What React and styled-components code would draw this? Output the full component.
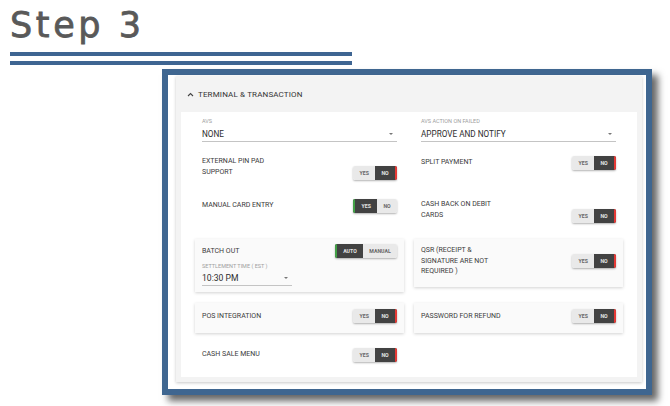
import React from 'react';
import styled, { createGlobalStyle } from 'styled-components';

const GlobalStyle = createGlobalStyle`
  html, body {
    margin: 0;
    padding: 0;
    background: #ffffff;
  }
  body {
    width: 670px;
    height: 406px;
    overflow: hidden;
    font-family: Roboto, "Liberation Sans", sans-serif;
  }
`;

const Page = styled.div`
  display: flex;
  flex-direction: column;
  padding-top: 8px;
`;

const Title = styled.h1`
  margin: 0 0 0 10px;
  font-family: "DejaVu Sans", "Open Sans", sans-serif;
  font-weight: 400;
  font-size: 35px;
  line-height: 35px;
  letter-spacing: 3.6px;
  color: #595959;
  -webkit-text-stroke: 0.8px #595959;
`;

const Rule = styled.div`
  width: 342px;
  height: 4px;
  margin: ${(p) => p.$top}px 0 0 10px;
  background: #3e6592;
`;

const Frame = styled.div`
  box-sizing: border-box;
  width: 490px;
  height: 326px;
  margin: 4px 0 0 162px;
  padding: 1px 4px 7px 8px;
  border: 6px solid #3f6690;
  background: #ffffff;
  box-shadow: 6px 6px 7px rgba(0, 0, 0, 0.6);
  display: flex;
`;

const Card = styled.div`
  flex: 1;
  display: flex;
  flex-direction: column;
  background: #f3f3f3;
  box-shadow: 0 1px 3px rgba(0, 0, 0, 0.22);
`;

const CardHeader = styled.div`
  height: 36px;
  box-sizing: border-box;
  padding: 2px 0 0 11px;
  display: flex;
  align-items: center;
  gap: 4px;
  font-size: 8px;
  color: #333;
  letter-spacing: 0.15px;
`;

const Content = styled.div`
  flex: 1;
  margin: 0 5px 5px;
  padding: 6.5px 14px 0;
  background: #ffffff;
  display: flex;
  flex-direction: column;
`;

const Pair = styled.div`
  display: grid;
  grid-template-columns: 1fr 1fr;
  column-gap: 10px;
  align-items: start;
  margin-top: ${(p) => p.$top || 0}px;
`;

const Cell = styled.div`
  padding: 0 7px;
  display: flex;
  justify-content: space-between;
  align-items: flex-end;
`;

const Box = styled.div`
  box-sizing: border-box;
  padding: ${(p) => p.$pad || '6px 7px 9.6px'};
  background: #fafafa;
  box-shadow: 0 1px 3px rgba(0, 0, 0, 0.18);
  display: flex;
  flex-direction: ${(p) => (p.$column ? 'column' : 'row')};
  justify-content: space-between;
  align-items: ${(p) => (p.$column ? 'stretch' : 'center')};
`;

const RowText = styled.div`
  font-size: 7px;
  line-height: 10.6px;
  color: #3a3a3a;
  padding-bottom: ${(p) => (p.$flat ? 0 : 2.5)}px;
  white-space: pre-line;
`;

const SelectWrap = styled.div`
  display: flex;
  flex-direction: column;
  width: ${(p) => p.$width || 'auto'};
  margin-top: ${(p) => p.$top || 0}px;
`;

const SmallLabel = styled.div`
  font-size: 5.5px;
  line-height: 7px;
  color: #a0a0a0;
`;

const Field = styled.div`
  display: flex;
  align-items: center;
  justify-content: space-between;
  padding: 3.5px 4px 2px 0;
  border-bottom: 1px solid #c4c4c4;
  font-size: ${(p) => p.$size || 8.2}px;
  line-height: 10px;
  color: #2e2e2e;
`;

const Caret = styled.span`
  width: 0;
  height: 0;
  border-left: 2.5px solid transparent;
  border-right: 2.5px solid transparent;
  border-top: 2.5px solid #777;
`;

const Toggle = styled.div`
  display: flex;
  height: 14px;
  border-radius: 2px;
  overflow: hidden;
  flex-shrink: 0;
  box-shadow: 0 1px 2px rgba(0, 0, 0, 0.3);
`;

const Segment = styled.div`
  display: flex;
  align-items: center;
  justify-content: center;
  padding: 0 6.3px;
  font-size: 5.2px;
  font-weight: 700;
  background: ${(p) => (p.$on ? '#424242' : '#e9e9e9')};
  color: ${(p) => (p.$on ? '#e6e6e6' : '#666')};
  border-left: ${(p) => (p.$accent === 'green' ? '2px solid #43a047' : 'none')};
  border-right: ${(p) => (p.$accent === 'red' ? '2px solid #e53935' : 'none')};
`;

const BoxTop = styled.div`
  display: flex;
  justify-content: space-between;
  align-items: center;
`;

function Switch({ options = ['YES', 'NO'], value = 'NO' }) {
  return (
    <Toggle>
      {options.map((o, i) => {
        const on = o === value;
        let accent;
        if (on) accent = i === 0 ? 'green' : 'red';
        return (
          <Segment key={o} $on={on} $accent={accent}>
            {o}
          </Segment>
        );
      })}
    </Toggle>
  );
}

function Select({ label, value, width, size, top }) {
  return (
    <SelectWrap $width={width} $top={top}>
      <SmallLabel>{label}</SmallLabel>
      <Field $size={size}>
        <span>{value}</span>
        <Caret />
      </Field>
    </SelectWrap>
  );
}

function Chevron() {
  return (
    <svg width="7" height="5" viewBox="0 0 7 5">
      <polyline points="1,4 3.5,1.5 6,4" fill="none" stroke="#444" strokeWidth="1.1" />
    </svg>
  );
}

export default function App() {
  return (
    <>
      <GlobalStyle />
      <Page>
        <Title>Step 3</Title>
        <Rule $top={9} />
        <Rule $top={4.5} />
        <Frame>
          <Card>
            <CardHeader>
              <Chevron />
              TERMINAL &amp; TRANSACTION
            </CardHeader>
            <Content>
              <Pair>
                <Cell>
                  <Select label="AVS" value="NONE" width="100%" />
                </Cell>
                <Cell>
                  <Select label="AVS ACTION ON FAILED" value="APPROVE AND NOTIFY" width="100%" />
                </Cell>
              </Pair>
              <Pair $top={14.7}>
                <Cell>
                  <RowText>{'EXTERNAL PIN PAD\nSUPPORT'}</RowText>
                  <Switch value="NO" />
                </Cell>
                <Cell>
                  <RowText>SPLIT PAYMENT</RowText>
                  <Switch value="NO" />
                </Cell>
              </Pair>
              <Pair $top={19.3}>
                <Cell>
                  <RowText>MANUAL CARD ENTRY</RowText>
                  <Switch value="YES" />
                </Cell>
                <Cell>
                  <RowText>{'CASH BACK ON DEBIT\nCARDS'}</RowText>
                  <Switch value="NO" />
                </Cell>
              </Pair>
              <Pair $top={16.3}>
                <Box $column $pad="5px 7px 5.7px">
                  <BoxTop>
                    <RowText $flat>BATCH OUT</RowText>
                    <Switch options={['AUTO', 'MANUAL']} value="AUTO" />
                  </BoxTop>
                  <Select label="SETTLEMENT TIME ( EST )" value="10:30 PM" width="90px" size={8.6} top={4.8} />
                </Box>
                <Box>
                  <RowText $flat>{'QSR (RECEIPT &\nSIGNATURE ARE NOT\nREQUIRED )'}</RowText>
                  <Switch value="NO" />
                </Box>
              </Pair>
              <Pair $top={11}>
                <Box>
                  <RowText $flat>POS INTEGRATION</RowText>
                  <Switch value="NO" />
                </Box>
                <Box>
                  <RowText $flat>PASSWORD FOR REFUND</RowText>
                  <Switch value="NO" />
                </Box>
              </Pair>
              <Pair $top={15}>
                <Cell>
                  <RowText>CASH SALE MENU</RowText>
                  <Switch value="NO" />
                </Cell>
                <div />
              </Pair>
            </Content>
          </Card>
        </Frame>
      </Page>
    </>
  );
}
